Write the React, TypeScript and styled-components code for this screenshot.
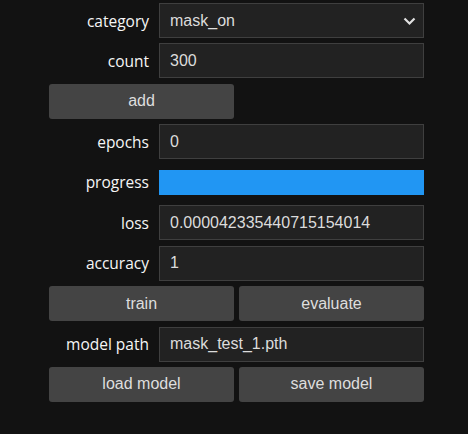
import React from "react";
import styled, { createGlobalStyle } from "styled-components";

const Global = createGlobalStyle`
  html, body { margin: 0; padding: 0; background: #121212; }
  body { width: 468px; height: 434px; overflow: hidden; }
`;

const Panel = styled.div`
  display: flex;
  flex-direction: column;
  gap: 5.45px;
  width: 375px;
  padding: 3px 0 0 49px;
`;

const Row = styled.div`
  display: grid;
  grid-template-columns: 100px 265px;
  column-gap: 10px;
  align-items: center;
  height: 35px;
`;

const Label = styled.label`
  text-align: right;
  font-family: "Open Sans", "Noto Sans", sans-serif;
  font-size: 15.5px;
  color: #f6f6f6;
  white-space: nowrap;
`;

const Field = styled.div`
  box-sizing: border-box;
  position: relative;
  height: 35px;
  display: flex;
  align-items: center;
  padding: 0 10px;
  background: #222222;
  border: 1px solid #3f3f3f;
  font-family: "Liberation Sans", Arial, sans-serif;
  font-size: 16px;
  color: #dcdcdc;
  white-space: nowrap;
  overflow: hidden;
`;

const Chevron = styled.svg`
  position: absolute;
  right: 7px;
  top: 13px;
`;

const Bar = styled.div<{ $pct: number }>`
  height: 25px;
  background: #2a2a2a;
  position: relative;
  &::after {
    content: "";
    position: absolute;
    inset: 0;
    width: ${(p) => p.$pct}%;
    background: #2196f3;
  }
`;

const ButtonRow = styled.div<{ $single?: boolean }>`
  display: grid;
  grid-template-columns: ${(p) => (p.$single ? "185px" : "185px 185px")};
  column-gap: 5px;
  height: 35px;
`;

const Button = styled.button`
  box-sizing: border-box;
  height: 35px;
  border: none;
  border-radius: 3px;
  background: #444444;
  color: #dedede;
  font-family: "Liberation Sans", Arial, sans-serif;
  font-size: 16px;
  padding: 0;
`;

export default function App() {
  return (
    <>
      <Global />
      <Panel>
        <Row>
          <Label>category</Label>
          <Field>
            mask_on
            <Chevron width="13" height="9" viewBox="0 0 13 9">
              <path d="M1.5 1.5 L6.5 6.5 L11.5 1.5" fill="none" stroke="#e0e0e0" strokeWidth="2.2" />
            </Chevron>
          </Field>
        </Row>
        <Row>
          <Label>count</Label>
          <Field>300</Field>
        </Row>
        <ButtonRow $single>
          <Button>add</Button>
        </ButtonRow>
        <Row>
          <Label>epochs</Label>
          <Field>0</Field>
        </Row>
        <Row>
          <Label>progress</Label>
          <Bar $pct={100} />
        </Row>
        <Row>
          <Label>loss</Label>
          <Field>0.000042335440715154014</Field>
        </Row>
        <Row>
          <Label>accuracy</Label>
          <Field>1</Field>
        </Row>
        <ButtonRow>
          <Button>train</Button>
          <Button>evaluate</Button>
        </ButtonRow>
        <Row>
          <Label>model path</Label>
          <Field>mask_test_1.pth</Field>
        </Row>
        <ButtonRow>
          <Button>load model</Button>
          <Button>save model</Button>
        </ButtonRow>
      </Panel>
    </>
  );
}
